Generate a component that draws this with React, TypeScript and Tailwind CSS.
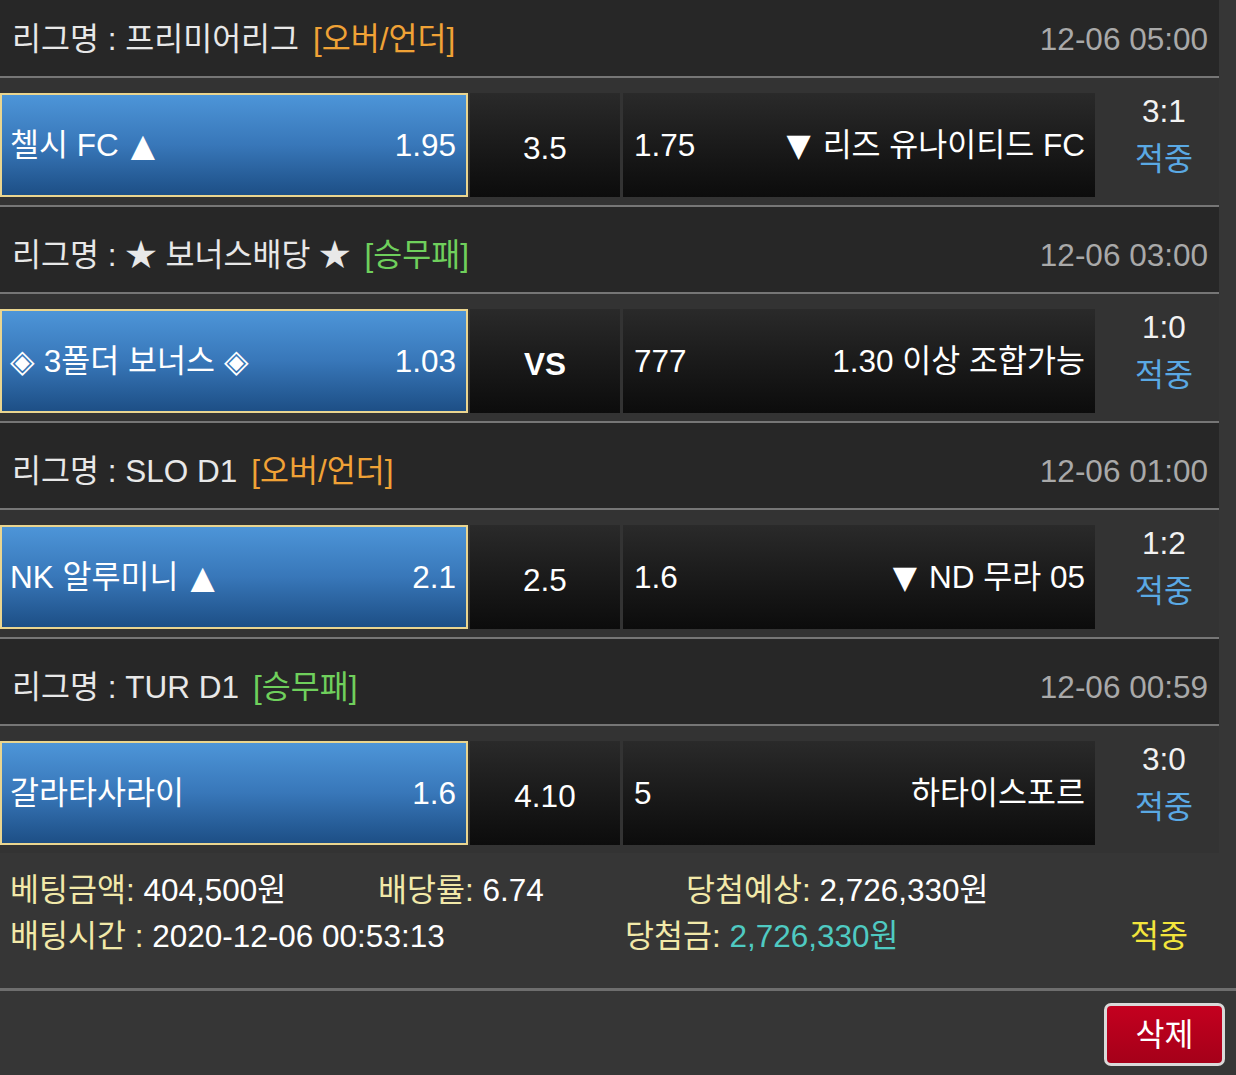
const matches = [
  {
    league: '프리미어리그',
    tag: '[오버/언더]',
    tagClass: 'text-[#f0a236]',
    time: '12-06 05:00',
    home: '첼시 FC',
    homeMark: '▲',
    homeOdds: '1.95',
    mid: '3.5',
    awayOdds: '1.75',
    awayMark: '▼',
    away: '리즈 유나이티드 FC',
    score: '3:1',
  },
  {
    league: '★ 보너스배당 ★',
    tag: '[승무패]',
    tagClass: 'text-[#6fd05c]',
    time: '12-06 03:00',
    home: '◈ 3폴더 보너스 ◈',
    homeMark: '',
    homeOdds: '1.03',
    mid: 'VS',
    awayOdds: '777',
    awayMark: '',
    away: '1.30 이상 조합가능',
    score: '1:0',
  },
  {
    league: 'SLO D1',
    tag: '[오버/언더]',
    tagClass: 'text-[#f0a236]',
    time: '12-06 01:00',
    home: 'NK 알루미니',
    homeMark: '▲',
    homeOdds: '2.1',
    mid: '2.5',
    awayOdds: '1.6',
    awayMark: '▼',
    away: 'ND 무라 05',
    score: '1:2',
  },
  {
    league: 'TUR D1',
    tag: '[승무패]',
    tagClass: 'text-[#6fd05c]',
    time: '12-06 00:59',
    home: '갈라타사라이',
    homeMark: '',
    homeOdds: '1.6',
    mid: '4.10',
    awayOdds: '5',
    awayMark: '',
    away: '하타이스포르',
    score: '3:0',
  },
]

type Match = (typeof matches)[number]

// triangles: mid-size glyph from DejaVu
const mark = { fontFamily: '"DejaVu Sans", sans-serif' }

function MatchBlock({ m, last }: { m: Match; last: boolean }) {
  return (
    <div>
      {/* league header */}
      <div className="flex h-[85px] w-[1219px] items-center justify-between bg-[#272727] pl-3 pr-[11px] pt-[11px]">
        <div className="flex items-center text-[#e8e8e8]">
          <span>리그명 : {m.league}</span>
          <span className={`ml-[14px] ${m.tagClass}`}>{m.tag}</span>
        </div>
        <span className="text-[#a9a9a9]">{m.time}</span>
      </div>
      <div className="h-[2px] w-[1219px] bg-[#767676]" />

      {/* match row */}
      <div className="flex h-[127px] w-[1219px] items-start bg-[#333333] pt-[15px]">
        <div className="flex h-[104px] w-[468px] items-center justify-between border-2 border-[#ead58f] bg-gradient-to-b from-[#4d95d8] via-[#3877b9] to-[#1d4f86] pl-[8px] pr-[10px] text-white">
          <span>
            {m.home}
            {m.homeMark && (
              <span className="ml-[12px]" style={mark}>
                {m.homeMark}
              </span>
            )}
          </span>
          <span>{m.homeOdds}</span>
        </div>
        <div
          className={`ml-[2px] flex h-[104px] w-[150px] items-center justify-center bg-gradient-to-b from-[#2a2a2a] to-[#0c0c0c] pt-[5px] text-white ${
            m.mid === 'VS' ? 'font-bold' : ''
          }`}
        >
          {m.mid}
        </div>
        <div className="ml-[3px] flex h-[104px] w-[472px] items-center justify-between bg-gradient-to-b from-[#2a2a2a] to-[#0c0c0c] pl-[11px] pr-[10px] text-white">
          <span>{m.awayOdds}</span>
          <span>
            {m.awayMark && (
              <span className="mr-[12px]" style={mark}>
                {m.awayMark}
              </span>
            )}
            {m.away}
          </span>
        </div>
        <div className="flex flex-1 flex-col items-center pl-[14px] leading-[48px]">
          <span className="-mt-[6px] text-[#f2f2f2]">{m.score}</span>
          <span className="text-[#5aa9e4]">적중</span>
        </div>
      </div>
      {!last && <div className="h-[2px] w-[1219px] bg-[#767676]" />}
    </div>
  )
}

export default function App() {
  return (
    <div
      className="h-[1075px] w-[1236px] overflow-hidden bg-[#363636] text-[31.5px] leading-[40px]"
      style={{ fontFamily: '"Liberation Sans", "Noto Sans CJK KR", sans-serif' }}
    >
      <div className="-mt-[9px]">
        {matches.map((m, i) => (
          <MatchBlock key={i} m={m} last={i === matches.length - 1} />
        ))}
      </div>

      {/* bet summary */}
      <div className="h-[135px] pt-[14px] leading-[46px]">
        <div className="flex">
          <span className="w-[378px] pl-[10px]">
            <span className="text-[#f2e9a9]">베팅금액: </span>
            <span className="text-white">404,500원</span>
          </span>
          <span className="w-[308px]">
            <span className="text-[#f2e9a9]">배당률: </span>
            <span className="text-white">6.74</span>
          </span>
          <span>
            <span className="text-[#f2e9a9]">당첨예상: </span>
            <span className="text-white">2,726,330원</span>
          </span>
        </div>
        <div className="flex">
          <span className="w-[625px] pl-[10px]">
            <span className="text-[#f2e9a9]">배팅시간 : </span>
            <span className="text-white">2020-12-06 00:53:13</span>
          </span>
          <span className="w-[505px]">
            <span className="text-[#f2e9a9]">당첨금: </span>
            <span className="text-[#4fcac2]">2,726,330원</span>
          </span>
          <span className="text-[#f3e53c]">적중</span>
        </div>
      </div>
      <div className="h-[3px] bg-[#6e6e6e]" />

      <div className="flex justify-end pr-[11px] pt-[12px]">
        <button className="flex h-[63px] w-[121px] items-center justify-center rounded-[7px] border-[3px] border-[#d9d9d9] bg-gradient-to-b from-[#c4001f] to-[#a50019] text-white">
          삭제
        </button>
      </div>
    </div>
  )
}
